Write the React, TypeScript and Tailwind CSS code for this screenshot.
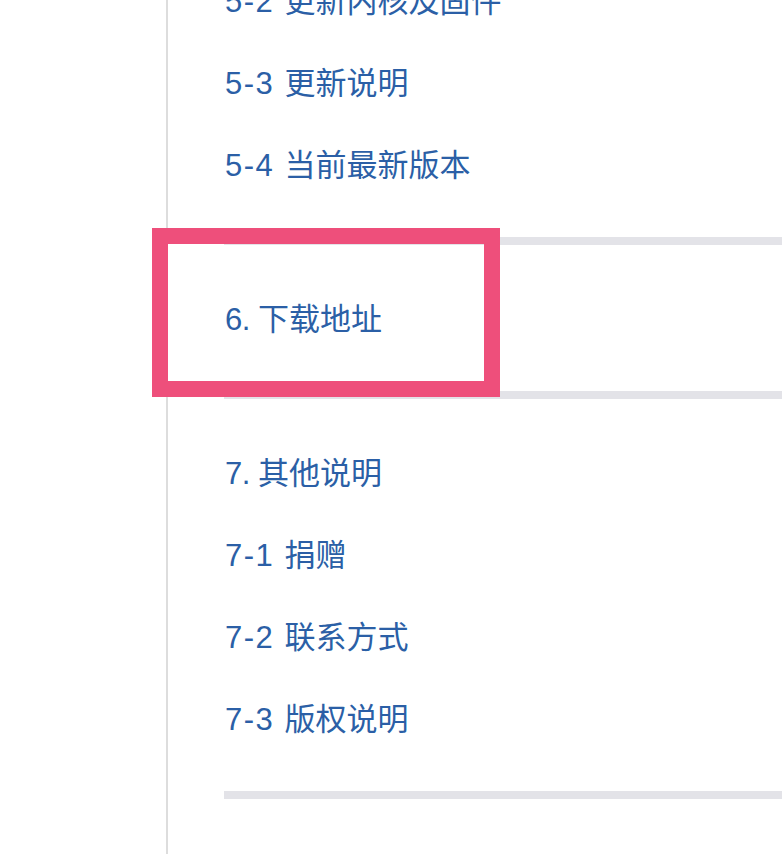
import React from "react";

type Item = { label: string };

const sections: Item[][] = [
  [
    { label: "5-2 更新内核及固件" },
    { label: "5-3 更新说明" },
    { label: "5-4 当前最新版本" },
  ],
  [{ label: "6. 下载地址" }],
  [
    { label: "7. 其他说明" },
    { label: "7-1 捐赠" },
    { label: "7-2 联系方式" },
    { label: "7-3 版权说明" },
  ],
];

const Row = ({ label }: Item) => {
  const [num, ...rest] = label.split(" ");
  const sub = num.includes("-");
  return (
    <li className="h-[82px] flex items-center pl-px pt-[2px]">
      <a href="#" className="text-[31px] leading-none text-[#2b5fa6]">
        <span className={sub ? "tracking-[1.5px]" : "tracking-[-0.5px]"}>
          {num}{" "}
        </span>
        {rest.join(" ")}
      </a>
    </li>
  );
};

const Divider = () => <div className="h-2 my-8 bg-[#e3e3e8]" />;

const App = () => {
  return (
    <div
      className="w-[782px] h-[854px] overflow-hidden bg-white flex"
      style={{ fontFamily: '"Liberation Sans", "Noto Sans CJK SC", sans-serif' }}
    >
      <div className="w-[166px] shrink-0" />
      <div className="flex-1 border-l-2 border-[#dddddd] pl-[56px] min-w-0">
        <div className="-mt-[41px]">
          <ul>
            {sections[0].map((item) => (
              <Row key={item.label} {...item} />
            ))}
          </ul>

          {/* highlighted section */}
          <div className="relative">
            <Divider />
            <ul>
              {sections[1].map((item) => (
                <Row key={item.label} {...item} />
              ))}
            </ul>
            <Divider />
            <div className="absolute left-[-72px] top-[-9px] w-[348px] h-[169px] border-[16px] border-[#ee4f7b] pointer-events-none" />
          </div>

          <ul>
            {sections[2].map((item) => (
              <Row key={item.label} {...item} />
            ))}
          </ul>
          <Divider />
        </div>
      </div>
    </div>
  );
};

export default App;
